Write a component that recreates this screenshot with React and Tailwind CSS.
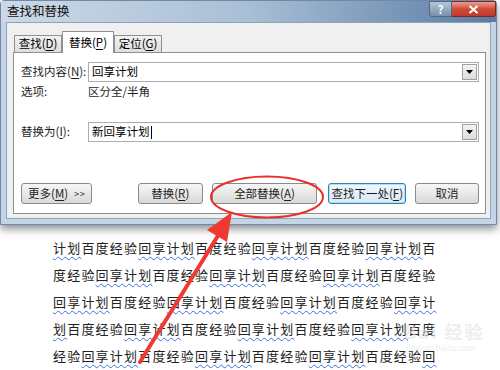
import React from 'react';

const cjk = { fontFamily: '"Microsoft YaHei", "Noto Sans CJK SC", "Liberation Sans", sans-serif' };

const Acc = ({ children }) => <span className="underline underline-offset-2">{children}</span>;

const Btn = ({ children, className = '', focus = false }) => (
  <div
    className={`h-[21px] flex items-center justify-center rounded-[3px] text-[11.5px] leading-none whitespace-nowrap text-[#1e1e1e] ${
      focus
        ? 'border border-[#3c7fb1] shadow-[inset_0_0_0_1px_#a8e4f9] bg-gradient-to-b from-[#f3f8fc] to-[#d8e8f4]'
        : 'border border-[#8a8a8a] bg-gradient-to-b from-[#f6f6f6] via-[#e8e8e8] to-[#d8d8d8]'
    } ${className}`}
  >
    {children}
  </div>
);

const Tab = ({ children, active }) => (
  <div
    className={`flex items-center justify-center text-[11.5px] leading-none whitespace-nowrap border border-[#8e8f8f] border-b-0 ${
      active ? 'h-[22px] w-[52px] bg-white relative z-10 -mb-px' : 'h-[17px] w-[48px] bg-gradient-to-b from-[#f2f2f2] to-[#dedede]'
    }`}
  >
    {children}
  </div>
);

const Combo = ({ value, caret }) => (
  <div className="flex-1 h-[20px] border border-[#abadb3] bg-white flex items-center">
    <span className="pl-[3px] text-[11.5px] leading-none text-black flex-1 flex items-center">
      {value}
      {caret && <span className="inline-block w-px h-[13px] bg-black ml-px" />}
    </span>
    <div className="w-[15px] h-[16px] mr-px border border-[#a0a0a0] bg-gradient-to-b from-[#f4f4f4] to-[#dcdcdc] flex items-center justify-center">
      <svg width="7" height="4" viewBox="0 0 7 4"><path d="M0 0h7L3.5 4z" fill="#000" /></svg>
    </div>
  </div>
);

const base = '计划百度经验回享';
const starts = [0, 3, 6, 1, 4];

const Line = ({ s }) => {
  const out = [];
  let buf = '';
  let mark = null;
  for (let i = 0; i < 27; i++) {
    const idx = (s + i) % 8;
    const m = idx === 6 || idx === 7 || idx === 0 || idx === 1;
    if (mark !== null && m !== mark) {
      out.push({ t: buf, m: mark });
      buf = '';
    }
    mark = m;
    buf += base[idx];
  }
  out.push({ t: buf, m: mark });
  return (
    <div className="h-[27px] flex items-center whitespace-nowrap text-[13px] leading-none tracking-[1.2px] text-[#222]">
      {out.map((o, i) =>
        o.m ? (
          <span key={i} className="underline decoration-wavy decoration-[#3d6fe0] underline-offset-[3px] decoration-1">{o.t}</span>
        ) : (
          <span key={i}>{o.t}</span>
        )
      )}
    </div>
  );
};

export default function App() {
  return (
    <div className="w-[500px] h-[370px] bg-white relative overflow-hidden" style={cjk}>
      {/* Dialog window */}
      <div className="w-[497px] bg-[#c4d5e8] border border-[#6f8aa8] rounded-t-[4px] shadow-[0_4px_8px_rgba(0,0,0,0.45)]">
        {/* Title bar */}
        <div className="h-[21px] flex items-start bg-gradient-to-r from-[#cdd9e6] via-[#a9bfd6] to-[#5a7ca4]">
          <div className="pl-[6px] pt-[4px] text-[12.5px] leading-none text-[#111]">查找和替换</div>
          <div className="ml-auto flex">
            <div className="w-[23px] h-[16px] border border-[#52677f] rounded-bl-[3px] bg-gradient-to-b from-[#b4c6da] to-[#7990ab] flex items-center justify-center text-white text-[11px] leading-none font-bold">?</div>
            <div className="w-[44px] h-[16px] border border-[#7a2a22] border-l-0 rounded-br-[3px] bg-gradient-to-b from-[#e8a091] via-[#cf4b35] to-[#c0392b] flex items-center justify-center">
              <svg width="11" height="9" viewBox="0 0 11 9"><path d="M1.5 1l8 7M9.5 1l-8 7" stroke="#fff" strokeWidth="2.2" /></svg>
            </div>
          </div>
        </div>
        {/* Client */}
        <div className="px-[5px] pb-[5px]">
          <div className="bg-[#f0f0f0] border border-[#8fa3ba] pt-[8px] pl-[6px] pr-[4px] pb-[4px]">
            <div className="flex items-end pl-px">
              <Tab>查找(<Acc>D</Acc>)</Tab>
              <Tab active>替换(<Acc>P</Acc>)</Tab>
              <Tab>定位(<Acc>G</Acc>)</Tab>
            </div>
            <div className="bg-white border border-[#8e8f8f] pt-[9px] pl-[7px] pr-[6px] pb-[9px] text-[11.5px] leading-none text-[#1e1e1e]">
              <div className="flex items-center h-[20px]">
                <div className="w-[67px] whitespace-nowrap">查找内容(<Acc>N</Acc>):</div>
                <Combo value="回享计划" />
              </div>
              <div className="flex items-center h-[20px]">
                <div className="w-[67px] whitespace-nowrap">选项:</div>
                <div className="whitespace-nowrap">区分全/半角</div>
              </div>
              <div className="flex items-center h-[20px] mt-[20px]">
                <div className="w-[67px] whitespace-nowrap">替换为(<Acc>I</Acc>):</div>
                <Combo value="新回享计划" caret />
              </div>
              <div className="flex items-center mt-[41px]">
                <Btn className="w-[71px] justify-start pl-[6px]">
                  更多(<Acc>M</Acc>)<span className="ml-[6px] text-[9px] tracking-[1px]">&gt;&gt;</span>
                </Btn>
                <Btn className="w-[65px] ml-[46px]">替换(<Acc>R</Acc>)</Btn>
                <Btn className="w-[106px] ml-[9px]">全部替换(<Acc>A</Acc>)</Btn>
                <Btn className="w-[78px] ml-[11px]" focus>查找下一处(<Acc>F</Acc>)</Btn>
                <Btn className="w-[64px] ml-[9px]">取消</Btn>
              </div>
            </div>
          </div>
        </div>
      </div>

      {/* Document text */}
      <div className="pl-[53px] pt-[9px]">
        {starts.map((s, i) => <Line key={i} s={s} />)}
      </div>

      {/* Watermark */}
      <div className="absolute left-[404px] top-[322px] text-[#e4e4e4] opacity-60 leading-none">
        <div className="text-[18px] font-bold tracking-[2px]">Bai 经验</div>
        <div className="text-[8px] mt-[4px] ml-[2px]">jingyan.baidu.com</div>
      </div>

      {/* Annotation */}
      <svg className="absolute left-0 top-0 pointer-events-none" width="500" height="370">
        <ellipse cx="267" cy="197" rx="56" ry="20.5" fill="none" stroke="#e8302a" strokeWidth="2" />
        <line x1="140" y1="362" x2="219" y2="234" stroke="#ee3a33" strokeWidth="4" strokeLinecap="round" />
        <polygon points="232,212 227,242 207,230" fill="#ee3a33" />
      </svg>
    </div>
  );
}
